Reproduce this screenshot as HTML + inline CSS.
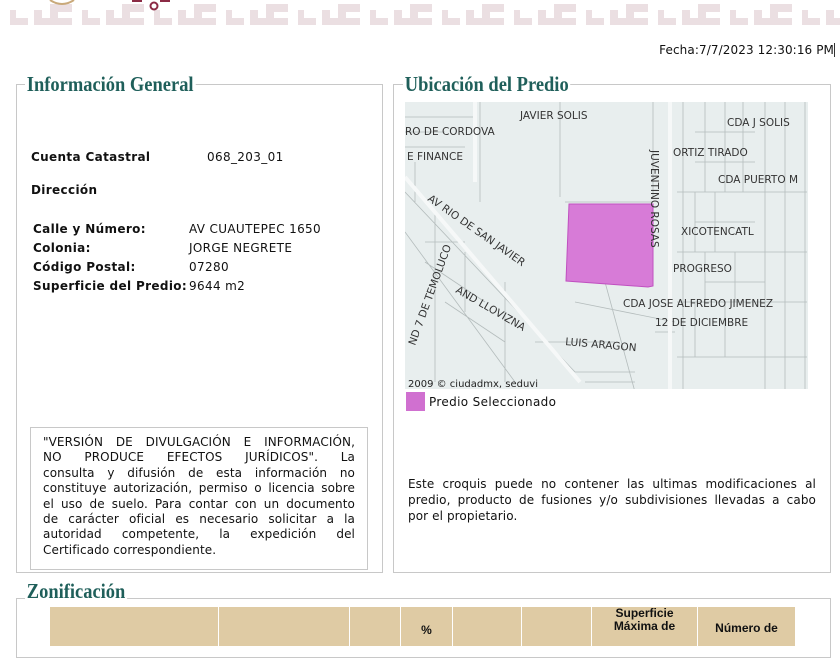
<!DOCTYPE html>
<html><head><meta charset="utf-8"><style>
*{margin:0;padding:0;box-sizing:border-box}
body{width:840px;height:630px;overflow:hidden;background:#fff;position:relative;font-family:"DejaVu Sans","Liberation Sans",sans-serif;font-size:12px;color:#111;letter-spacing:0.35px}
.a{position:absolute;white-space:nowrap}
.fs{position:absolute;border:1px solid #c8c8c8}
.lg{position:absolute;background:#fff;font-family:"Liberation Serif",serif;font-weight:bold;font-size:21px;color:#1f5f5a;padding:0 2px;transform:scaleX(0.88);transform-origin:left;line-height:22px;letter-spacing:0}
b{font-weight:bold}
.disc{position:absolute;left:30px;top:427px;width:338px;height:143px;border:1px solid #c8c8c8;padding:7px 12px;font-size:12px;line-height:15.4px;color:#111;letter-spacing:0.1px}
.j{text-align:justify;text-align-last:justify;white-space:nowrap}
th{background:#dfcba4;border:1px solid #fff}
</style></head><body>
<svg class="a" style="left:0;top:0" width="840" height="28">
<defs><pattern id="p" x="10" y="0" width="72" height="28" patternUnits="userSpaceOnUse">
<path d="M0 10h6v8h12v7H0z M40 4h22v8h-14v6h14v7H40z M24 10h8v8h10v7H24z" fill="#ebdfe2"/>
</pattern></defs>
<rect width="840" height="28" fill="url(#p)"/>
<path d="M50 0q12 8 24 0" stroke="#c9a97a" stroke-width="2" fill="none"/>
<rect x="132" y="0" width="10" height="2" fill="#8b2b45"/><rect x="160" y="0" width="10" height="2" fill="#8b2b45"/>
<circle cx="154" cy="6" r="3.5" stroke="#8b2b45" stroke-width="2" fill="none"/>
</svg>
<div class="a" style="right:5px;top:43px;font-size:12px;letter-spacing:0.1px">Fecha:7/7/2023 12:30:16 PM <span style="border-left:1px solid #333"></span></div>

<div class="fs" style="left:16px;top:84px;width:367px;height:489px"></div>
<div class="lg" style="left:25px;top:73px">Información General</div>
<div class="a" style="left:31px;top:150px"><b>Cuenta Catastral</b></div>
<div class="a" style="left:207px;top:150px">068_203_01</div>
<div class="a" style="left:31px;top:183px"><b>Dirección</b></div>
<div class="a" style="left:33px;top:220px;line-height:19px"><b>Calle y Número:</b><br><b>Colonia:</b><br><b>Código Postal:</b><br><b>Superficie del Predio:</b></div>
<div class="a" style="left:189px;top:220px;line-height:19px">AV CUAUTEPEC 1650<br>JORGE NEGRETE<br>07280<br>9644 m2</div>
<div class="disc">
<div class="j">"VERSIÓN DE DIVULGACIÓN E INFORMACIÓN,</div>
<div class="j">NO PRODUCE EFECTOS JURÍDICOS". La</div>
<div class="j">consulta y difusión de esta información no</div>
<div class="j">constituye autorización, permiso o licencia sobre</div>
<div class="j">el uso de suelo. Para contar con un documento</div>
<div class="j">de carácter oficial es necesario solicitar a la</div>
<div class="j">autoridad competente, la expedición del</div>
<div>Certificado correspondiente.</div>
</div>

<div class="fs" style="left:393px;top:84px;width:438px;height:489px"></div>
<div class="lg" style="left:403px;top:73px">Ubicación del Predio</div>
<svg class="a" style="left:405px;top:102px" width="403" height="287" font-family="DejaVu Sans,sans-serif" font-size="10.5" fill="#333" letter-spacing="0">
<rect width="403" height="287" fill="#e8eeee"/>
<g stroke="#b4bcbc" stroke-width="0.8" fill="none">
<path d="M0 15h70M0 45h60M75 0v100M155 0v95M248 0v95M278 0v287M338 0v90M360 0v287M272 90h130M272 150h130M272 200h130M272 255h130M160 100h88M0 90l170 180M0 130l110 150M20 160l60 40M40 200l60 40M230 290l-30-110M30 110v170M100 180v100M130 240h80M170 200l100 20M290 30h60M290 60h60M290 120h60M300 180h60M250 230h20M0 30h40M10 60v40M20 140h40M60 150v60M300 0v90M320 0v90M290 90v60M310 90v60M330 150v50M300 150v50M400 0v287M380 0v287M290 200v55M320 200v55M170 270h60M180 280h50"/>
</g>
<g stroke="#f6f8f8" stroke-width="4" fill="none"><path d="M0 75l175 205M265 0v287M70 0v80"/></g>
<path d="M164 102h84v82l-5 1-82-6z" fill="#d77bd7" stroke="#c050c0"/>
<text x="115" y="17">JAVIER SOLIS</text>
<text x="0" y="33">RO DE CORDOVA</text>
<text x="2" y="58">E FINANCE</text>
<text x="322" y="24">CDA J SOLIS</text>
<text x="268" y="54">ORTIZ TIRADO</text>
<text x="313" y="81">CDA PUERTO M</text>
<text x="276" y="133">XICOTENCATL</text>
<text x="268" y="170">PROGRESO</text>
<text x="218" y="205">CDA JOSE ALFREDO JIMENEZ</text>
<text x="250" y="224">12 DE DICIEMBRE</text>
<text x="160" y="243" transform="rotate(5 160 243)">LUIS ARAGON</text>
<text transform="translate(22,98) rotate(35)">AV RIO DE SAN JAVIER</text>
<text transform="translate(50,190) rotate(30)">AND LLOVIZNA</text>
<text transform="translate(246,48) rotate(90)">JUVENTINO ROSAS</text>
<text transform="translate(10,244) rotate(-70)">ND 7 DE TEMOLUCO</text>
<text x="3" y="285" font-size="10" fill="#222">2009 © ciudadmx, seduvi</text>
</svg>
<div class="a" style="left:406px;top:392px;width:19px;height:19px;background:#d070d0"></div>
<div class="a" style="left:429px;top:395px">Predio Seleccionado</div>
<div class="a" style="left:408px;top:476px;width:408px;line-height:16px;font-size:12px;letter-spacing:0.1px">
<div class="j">Este croquis puede no contener las ultimas modificaciones al</div>
<div class="j">predio, producto de fusiones y/o subdivisiones llevadas a cabo</div>
<div>por el propietario.</div>
</div>

<div class="fs" style="left:16px;top:598px;width:815px;height:60px"></div>
<div class="lg" style="left:25px;top:580px">Zonificación</div>
<table class="a" style="left:49px;top:606px;border-collapse:collapse;font-family:'Liberation Sans',sans-serif;font-size:12px;letter-spacing:0">
<tr style="height:40px;vertical-align:top">
<th style="width:169px"></th><th style="width:131px"></th><th style="width:51px"></th><th style="width:52px;padding-top:16px">%</th><th style="width:69px"></th><th style="width:70px"></th><th style="width:106px;line-height:13px">Superficie<br>Máxima de</th><th style="width:98px;padding-top:14px">Número de</th>
</tr></table>
</body></html>
